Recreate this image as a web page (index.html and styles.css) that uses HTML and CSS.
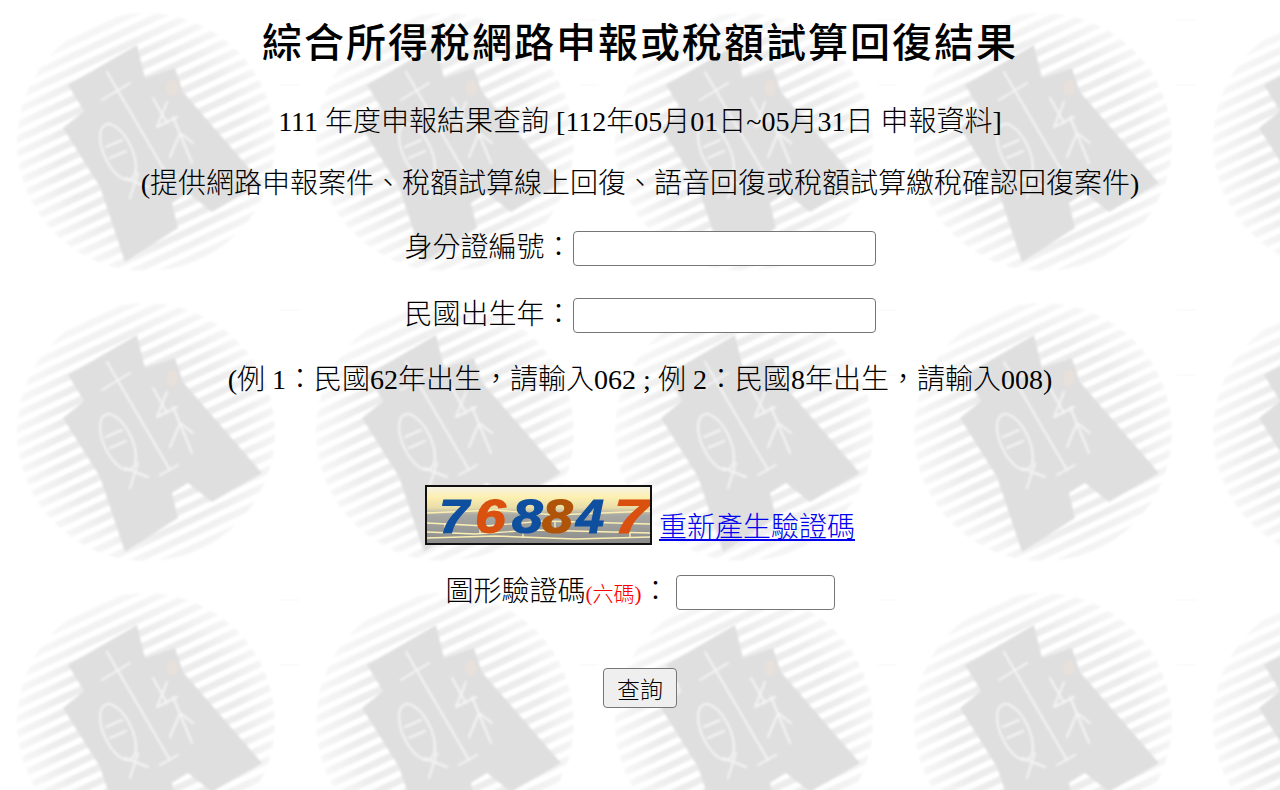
FILE: index.html
```html
<!doctype html>
<html lang="zh-Hant">
<head>
<meta charset="utf-8">
<title>綜合所得稅網路申報或稅額試算回復結果</title>
<link rel="stylesheet" href="styles.css">
</head>

<body>
	<div class="main">
		<h1 class="title">綜合所得稅網路申報或稅額試算回復結果</h1>
		<p class="line">111 年度申報結果查詢 [112年05月01日~05月31日 申報資料]</p>
		<p class="line">(提供網路申報案件、稅額試算線上回復、語音回復或稅額試算繳稅確認回復案件)</p>

		<p class="line field">身分證編號：<input class="idno" type="text"></p>
		<p class="line field">民國出生年：<input class="idno" type="text"></p>
		<p class="line">(例 1：民國62年出生，請輸入062 ; 例 2：民國8年出生，請輸入008)</p>

		<p class="line captchaline">
			<svg class="captcha" width="227" height="60" viewBox="0 0 227 60">
				<defs>
					<linearGradient id="sky" x1="0" y1="0" x2="0" y2="1">
						<stop offset="0" stop-color="#f4f3ee"/>
						<stop offset="0.2" stop-color="#fdf0b0"/>
						<stop offset="0.38" stop-color="#e8dca8"/>
						<stop offset="0.5" stop-color="#a8a8a4"/>
						<stop offset="1" stop-color="#8a8a8a"/>
					</linearGradient>
				</defs>
				<rect x="0" y="0" width="227" height="60" fill="url(#sky)"/>
				<g class="bricks">
					<path d="M2 28 L70 25 L130 30 L225 26"/>
					<path d="M2 38 L60 41 L120 36 L225 39"/>
					<path d="M2 47 L50 49 L110 45 L225 48"/>
					<path d="M2 53 L70 51 L150 54 L225 52"/>
					<path d="M20 38 V47 M55 41 V49 M98 45 V53 M130 36 V45 M170 39 V48 M205 48 V52"/>
				</g>
				<text class="digit blue" transform="translate(14 48) scale(1.12 1)">7</text>
				<text class="digit orange" transform="translate(50 48) scale(1.15 1)">6</text>
				<text class="digit blue" transform="translate(87 48) scale(1.15 1)">8</text>
				<text class="digit brown" transform="translate(117 48) scale(1.15 1)">8</text>
				<text class="digit blue" transform="translate(151 48) scale(1.05 1)">4</text>
				<text class="digit orange" transform="translate(189 48) scale(1.3 1)">7</text>
				<rect class="frame" x="1" y="1" width="225" height="58"/>
			</svg>
			<a class="renew" href="#">重新產生驗證碼</a>
		</p>

		<p class="line field">圖形驗證碼<span class="hint">(六碼)</span>：<input class="code" type="text"></p>

		<p class="btndiv"><button class="query" type="button">查詢</button></p>
	</div>
</body>
</html>
```

FILE: styles.css
```css
html {height: 100%;}

body {
	margin: 8px;
	background-color: #ffffff;
	background-image: url("data:image/svg+xml,%3Csvg xmlns='http://www.w3.org/2000/svg' width='299' height='290' viewBox='0 0 299 290'%3E%3Cdefs%3E%3CradialGradient id='f' gradientUnits='userSpaceOnUse' cx='150' cy='145' r='130'%3E%3Cstop offset='0.7' stop-color='white'/%3E%3Cstop offset='1' stop-color='%23777'/%3E%3C/radialGradient%3E%3Cmask id='m'%3E%3Ccircle cx='146' cy='142' r='129' fill='url(%23f)'/%3E%3C/mask%3E%3Cpattern id='s' width='14' height='13' patternUnits='userSpaceOnUse' patternTransform='rotate(-25)'%3E%3Crect width='14' height='7' fill='%23ececec'/%3E%3C/pattern%3E%3Cpattern id='d' width='3' height='3' patternUnits='userSpaceOnUse'%3E%3Crect width='3' height='3' fill='%23e0e0e0'/%3E%3Crect width='1' height='1' fill='%23dadada'/%3E%3C/pattern%3E%3Cfilter id='b'%3E%3CfeGaussianBlur stdDeviation='0.8'/%3E%3C/filter%3E%3C/defs%3E%3Cg filter='url(%23b)'%3E%3Crect width='299' height='290' fill='url(%23s)' mask='url(%23m)'/%3E%3Cpath d='M68 85L137 45L145 78L175 68L183 92L262 183L212 212L188 193L172 203L178 228L125 262L100 187L63 128L84 111Z' fill='url(%23d)'/%3E%3Cellipse cx='172' cy='88' rx='6' ry='8' fill='%23e8e0da'/%3E%3Cg fill='none' stroke='%23f4f4f4' stroke-width='2' stroke-linecap='round'%3E%3Cpath d='M107 72L170 180M102 100L130 83M160 185L178 175M153 98L167 123M167 102L157 127M157 127L177 117M173 117L192 163M170 157L180 133L193 143M125 178L148 187M138 173L130 198M106 147L122 140M110 158L126 151'/%3E%3Cellipse cx='118' cy='152' rx='14' ry='30' transform='rotate(-25 118 152)'/%3E%3C/g%3E%3C/g%3E%3Cpath d='M280 20H299M280 85H299' stroke='%23f7f7f7'/%3E%3C/svg%3E");
	background-repeat: repeat;
	font-family: "Liberation Serif", "Noto Sans CJK TC", serif;
	font-size: 28px;
	font-weight: 300;
	color: #000000;
}

.main {text-align: center;}

.title {margin: 0; padding-top: 4px; font-family: "Noto Sans CJK TC", sans-serif; font-size: 40px; letter-spacing: 2px; font-weight: 500; line-height: 56px;}

.line {margin: 0; padding-top: 21px; line-height: 41px;}
.title + .line {padding-top: 33px;}
.field {padding-top: 23px;}
.field + .line {padding-top: 24px;}
.field + .field {padding-top: 26px;}

.field input {vertical-align: 4px; box-sizing: border-box; background: #ffffff; border: 1px solid #767676; border-radius: 4px; padding: 0;}

.idno {width: 303px; height: 35px;}
.code {width: 159px; height: 35px; margin-left: 6px;}

.line.captchaline {padding-top: 85px;}
.captcha {vertical-align: -8px;}
.captcha .bricks path {fill: none; stroke: #fbf0b4; stroke-width: 1.4;}
.captcha .frame {fill: none; stroke: #111111; stroke-width: 2;}
.digit {font-family: "Liberation Sans", sans-serif; font-size: 48px; font-weight: bold; font-style: italic; stroke-width: 1.2px;}
.blue {fill: #0f4f9f; stroke: #0f4f9f;}
.orange {fill: #d9500f; stroke: #d9500f;}
.brown {fill: #b0540a; stroke: #b0540a;}

.renew {color: #0000ee; text-decoration: underline;}

.hint {font-size: 21px; color: #ff0000;}

.btndiv {margin: 0; padding-top: 53px;}
.query {width: 74px; height: 40px; padding: 0; box-sizing: border-box; background: #efefef; border: 1px solid #767676; border-radius: 4px; font-family: "Noto Sans CJK TC", sans-serif; font-size: 23px; font-weight: 300; color: #000000;}
```
